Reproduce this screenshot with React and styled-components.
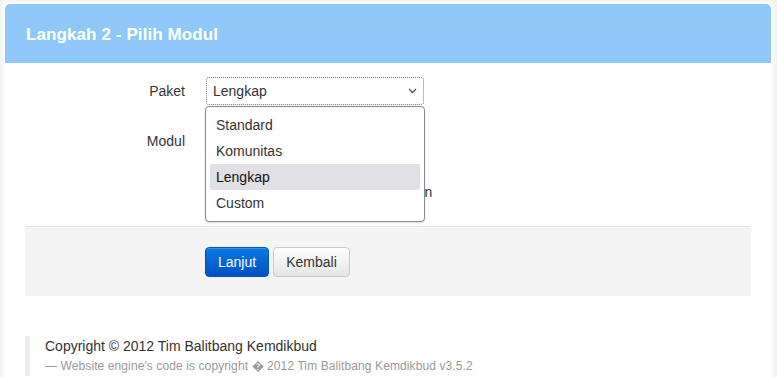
import React from "react";
import styled, { createGlobalStyle } from "styled-components";

const GlobalStyle = createGlobalStyle`
  html, body {
    margin: 0;
    padding: 0;
    background: #f4f4f4;
    font-family: "Liberation Sans", Arial, sans-serif;
    color: #333;
    overflow: hidden;
  }
`;

const Page = styled.div`
  padding: 2px 4px 0 3px;
  height: 375px;
`;

const Card = styled.div`
  background: #fff;
  border-radius: 6px 6px 0 0;
  padding: 2px 2px 40px;
  min-height: 400px;
`;

const Header = styled.div`
  background: #8fc8f8;
  border-radius: 5px 5px 0 0;
  height: 59px;
  display: flex;
  align-items: center;
  padding-left: 21px;
`;

const Title = styled.h3`
  margin: 0;
  color: #fff;
  font-size: 17px;
  font-weight: bold;
  padding-top: 2px;
  letter-spacing: 0.1px;
`;

const Body = styled.div`
  padding: 14px 20px 0;
`;

const Row = styled.div`
  display: flex;
  margin-bottom: ${(p) => p.$gap ?? 20}px;
`;

const Label = styled.div`
  width: 160px;
  text-align: right;
  font-size: 14px;
  color: #333;
  line-height: ${(p) => p.$lh || 28}px;
  padding-top: ${(p) => p.$pt || 0}px;
  flex-shrink: 0;
`;

const Controls = styled.div`
  margin-left: 21px;
  position: relative;
  padding-top: ${(p) => p.$pt || 0}px;
`;

const Select = styled.div`
  box-sizing: border-box;
  width: 218px;
  height: 28px;
  border: 1px dotted #7a7a7a;
  border-radius: 3px;
  display: flex;
  align-items: center;
  justify-content: space-between;
  padding: 0 6px 0 6px;
  font-size: 14px;
  color: #333;
`;

const Dropdown = styled.ul`
  box-sizing: border-box;
  position: absolute;
  top: 29px;
  left: -1px;
  z-index: 5;
  margin: 0;
  list-style: none;
  width: 220px;
  padding: 5px 4px;
  background: #fff;
  border: 1px solid #8a8a8a;
  border-radius: 4px;
  box-shadow: 0 1px 2px rgba(0, 0, 0, 0.15);
`;

const Option = styled.li`
  height: 26px;
  line-height: 26px;
  padding-left: 6px;
  font-size: 14px;
  color: ${(p) => (p.$active ? "#111" : "#333")};
  background: ${(p) => (p.$active ? "#e1e0e6" : "transparent")};
  border-radius: 2px;
`;

const Check = styled.label`
  display: flex;
  align-items: center;
  gap: 4px;
  height: 25px;
  font-size: 14px;
  color: #333;
  white-space: nowrap;
`;

const Actions = styled.div`
  background: #f4f4f4;
  border-top: 1px solid #e5e5e5;
  height: 69px;
  display: flex;
  align-items: center;
  gap: 4px;
  padding-left: 180px;
  margin-top: 22px;
`;

const Button = styled.button`
  height: 30px;
  padding: 0 12px;
  font-family: inherit;
  font-size: 14px;
  border-radius: 4px;
  cursor: pointer;
  color: ${(p) => (p.$primary ? "#fff" : "#333")};
  border: 1px solid ${(p) => (p.$primary ? "#0055b8" : "#c8c8c8")};
  background: ${(p) =>
    p.$primary
      ? "linear-gradient(to bottom, #0a78e2, #0051c4)"
      : "linear-gradient(to bottom, #ffffff, #e4e4e4)"};
  box-shadow: inset 0 1px 0 rgba(255, 255, 255, 0.2);
`;

const Footer = styled.blockquote`
  margin: 40px 0 0;
  border-left: 5px solid #eee;
  padding: 0 0 0 15px;
`;

const FooterMain = styled.p`
  margin: 0;
  font-size: 14px;
  line-height: 20px;
  color: #333;
`;

const FooterSmall = styled.small`
  display: block;
  font-size: 12px;
  line-height: 20px;
  color: #999;
  letter-spacing: 0.1px;
`;

const Chevron = () => (
  <svg width="9" height="6" viewBox="0 0 9 6">
    <polyline points="1,1 4.5,4.5 8,1" fill="none" stroke="#555" strokeWidth="1.3" />
  </svg>
);

const options = ["Standard", "Komunitas", "Lengkap", "Custom"];
const modules = ["Modul Inti", "Modul Tambahan", "Modul Pengayaan dan Pelatihan"];

export default function App() {
  return (
    <Page>
      <GlobalStyle />
      <Card>
        <Header>
          <Title>Langkah 2 - Pilih Modul</Title>
        </Header>
        <Body>
          <Row>
            <Label>Paket</Label>
            <Controls>
              <Select>
                <span>Lengkap</span>
                <Chevron />
              </Select>
              <Dropdown>
                {options.map((o) => (
                  <Option key={o} $active={o === "Lengkap"}>
                    {o}
                  </Option>
                ))}
              </Dropdown>
            </Controls>
          </Row>
          <Row $gap={0}>
            <Label $lh={25} $pt={4}>Modul</Label>
            <Controls $pt={4}>
              {modules.map((m) => (
                <Check key={m}>
                  <input type="checkbox" defaultChecked /> {m}
                </Check>
              ))}
            </Controls>
          </Row>
          <Actions>
            <Button $primary>Lanjut</Button>
            <Button>Kembali</Button>
          </Actions>
          <Footer>
            <FooterMain>Copyright © 2012 Tim Balitbang Kemdikbud</FooterMain>
            <FooterSmall>
              — Website engine's code is copyright � 2012 Tim Balitbang Kemdikbud v3.5.2
            </FooterSmall>
          </Footer>
        </Body>
      </Card>
    </Page>
  );
}
